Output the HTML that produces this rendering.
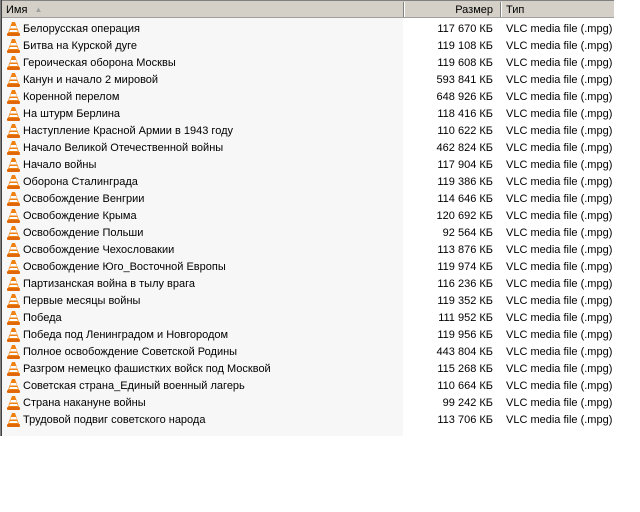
<!DOCTYPE html>
<html><head><style>
body{margin:0;width:640px;height:512px;background:#fff;position:relative;overflow:hidden;font-family:"Liberation Sans",sans-serif;font-size:11px;color:#000}
.hdr{position:absolute;left:0;top:0;width:614px;height:18px;background:#d4d0c8;border-top:1px solid #808080;border-bottom:1px solid #a0a0a0;box-sizing:border-box}
.hc{position:absolute;top:1px;height:17px;line-height:17px;box-sizing:border-box}
.sep{position:absolute;top:1px;width:1px;height:15px;background:#808080;box-shadow:1px 0 0 #fff}
.lb{position:absolute;left:0;top:0;width:2px;height:436px;background:#808080;border-right:1px solid #404040;box-sizing:border-box}
.namebg{position:absolute;left:2px;top:18px;width:401px;height:418px;background:#f7f7f7}
.row{position:absolute;left:0;width:620px;height:17px;line-height:17px;white-space:nowrap}
.ic{position:absolute;left:7px;top:0px;width:13px;height:15px}
.n{position:absolute;left:23px}
.s{position:absolute;right:127px;text-align:right}
.t{position:absolute;left:506px}
</style></head><body>
<div class="namebg"></div>
<div class="hdr">
<div class="hc" style="left:6px">Имя <span style="color:#a0a0a0;font-size:8px;position:relative;top:-1px;margin-left:4px">▲</span></div>
<div class="sep" style="left:403px"></div>
<div class="hc" style="right:121px">Размер</div>
<div class="sep" style="left:500px"></div>
<div class="hc" style="left:506px">Тип</div>
</div>
<div class="lb"></div>
<div id="rows"></div>
<script>
var d=[["Белорусская операция","117 670"],["Битва на Курской дуге","119 108"],["Героическая оборона Москвы","119 608"],["Канун и начало 2 мировой","593 841"],["Коренной перелом","648 926"],["На штурм Берлина","118 416"],["Наступление Красной Армии в 1943 году","110 622"],["Начало Великой Отечественной войны","462 824"],["Начало войны","117 904"],["Оборона Сталинграда","119 386"],["Освобождение Венгрии","114 646"],["Освобождение Крыма","120 692"],["Освобождение Польши","92 564"],["Освобождение Чехословакии","113 876"],["Освобождение Юго_Восточной Европы","119 974"],["Партизанская война в тылу врага","116 236"],["Первые месяцы войны","119 352"],["Победа","111 952"],["Победа под Ленинградом и Новгородом","119 956"],["Полное освобождение Советской Родины","443 804"],["Разгром немецко фашистких войск под Москвой","115 268"],["Советская страна_Единый военный лагерь","110 664"],["Страна накануне войны","99 242"],["Трудовой подвиг советского народа","113 706"]];
var ic='<svg class="ic" viewBox="0 0 13 15"><path d="M5 1h3l4 11H1z" fill="#f08010"/><path d="M4 5h5l1 2.5H3z" fill="#fff"/><path d="M3 9h7l1 2H2z" fill="#fff"/><rect x="0" y="12" width="13" height="3" rx="1" fill="#e06808"/></svg>';
var h='';d.forEach(function(r,i){h+='<div class="row" style="top:'+(21+17*i)+'px">'+ic+'<span class="n">'+r[0]+'</span><span class="s">'+r[1]+' КБ</span><span class="t">VLC media file (.mpg)</span></div>';});
document.getElementById('rows').innerHTML=h;
</script>
</body></html>
